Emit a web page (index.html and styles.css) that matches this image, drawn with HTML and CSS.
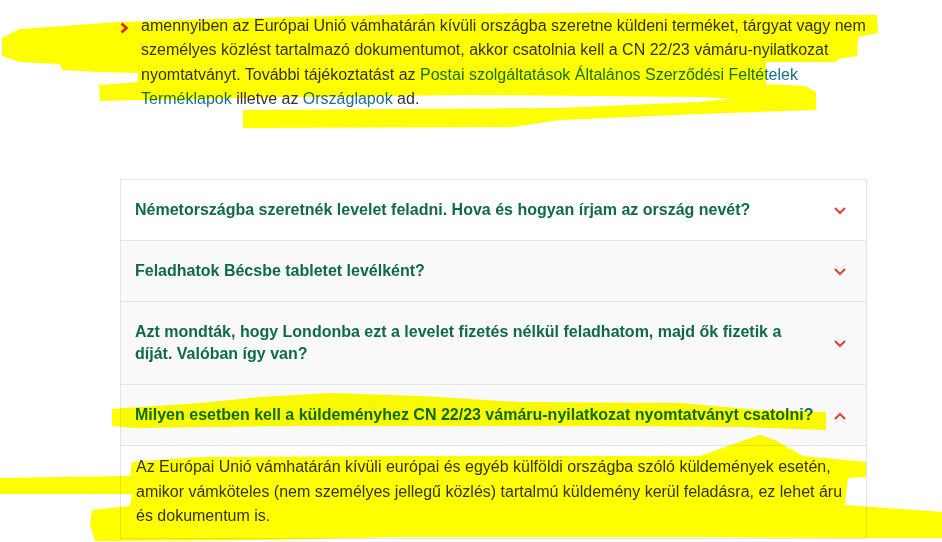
FILE: index.html
```
<!DOCTYPE html>
<html lang="hu">
<head>
<meta charset="utf-8">
<title>Postai szolgáltatások – GYIK</title>
<link rel="stylesheet" href="styles.css">
</head>
<body>
<main class="content">
  <ul class="bullets">
    <li class="bullet">
      <svg class="bullet-icon" width="9" height="12" viewBox="0 0 9 12"><polyline points="1.5,1.5 6.5,6 1.5,10.5" fill="none" stroke="#e0261c" stroke-width="2.6"/></svg>
      <p class="bullet-text">amennyiben az Európai Unió vámhatárán kívüli országba szeretne küldeni terméket, tárgyat vagy nem személyes közlést tartalmazó dokumentumot, akkor csatolnia kell a CN 22/23 vámáru-nyilatkozat nyomtatványt. További tájékoztatást az <a class="link" href="#">Postai szolgáltatások Általános Szerződési Feltételek</a> <a class="link" href="#">Terméklapok</a> illetve az <a class="link" href="#">Országlapok</a> ad.</p>
    </li>
  </ul>

  <section class="accordion">
    <div class="acc-item acc-white">
      <h3 class="acc-head">Németországba szeretnék levelet feladni. Hova és hogyan írjam az ország nevét?</h3>
      <svg class="acc-icon" width="12" height="8" viewBox="0 0 12 8"><polyline points="1,1 6,6 11,1" fill="none" stroke="#e2403a" stroke-width="2"/></svg>
    </div>
    <div class="acc-item">
      <h3 class="acc-head">Feladhatok Bécsbe tabletet levélként?</h3>
      <svg class="acc-icon" width="12" height="8" viewBox="0 0 12 8"><polyline points="1,1 6,6 11,1" fill="none" stroke="#e2403a" stroke-width="2"/></svg>
    </div>
    <div class="acc-item">
      <h3 class="acc-head">Azt mondták, hogy Londonba ezt a levelet fizetés nélkül feladhatom, majd ők fizetik a díját. Valóban így van?</h3>
      <svg class="acc-icon" width="12" height="8" viewBox="0 0 12 8"><polyline points="1,1 6,6 11,1" fill="none" stroke="#e2403a" stroke-width="2"/></svg>
    </div>
    <div class="acc-item">
      <h3 class="acc-head">Milyen esetben kell a küldeményhez CN 22/23 vámáru-nyilatkozat nyomtatványt csatolni?</h3>
      <svg class="acc-icon" width="12" height="8" viewBox="0 0 12 8"><polyline points="1,7 6,2 11,7" fill="none" stroke="#e2403a" stroke-width="2"/></svg>
    </div>
    <div class="acc-body">
      <p class="acc-text">Az Európai Unió vámhatárán kívüli európai és egyéb külföldi országba szóló küldemények esetén, amikor vámköteles (nem személyes jellegű közlés) tartalmú küldemény kerül feladásra, ez lehet áru és dokumentum is.</p>
    </div>
  </section>
</main>

<svg class="highlight" width="942" height="542" viewBox="0 0 942 542" aria-hidden="true">
  <path d="M2,38 L20,29 L120,22 L290,17 L430,14 L600,13 L877,15 L878,33 L858,37 L857,56 L838,59 L836,62 L764,62 L764,84 L805,86 L816,92 L816,102 L700,97 L470,95 L300,97 L140,100 L100,101 L99,85 L140,82 L140,73 L100,72 L62,70 L60,64 L20,62 L2,56 Z"/>
  <rect x="138" y="56" width="628" height="32"/>
  <path d="M243,110 L560,108 L700,102 L790,92 L816,93 L816,110 L700,114 L560,120 L513,127 L243,128 Z"/>
  <path d="M112,409 L200,403 L260,397 L330,393 L420,396 L520,402 L680,403 L760,410 L826,412 L826,430 L740,427 L600,426 L450,426 L300,426 L135,428 L112,426 Z"/>
  <path d="M0,478 L130,476 L132,462 L200,457 L400,456 L700,456 L745,440 L760,435 L775,440 L803,456 L866,462 L866,477 L848,478 L845,505 L942,512 L942,538 L860,538 L700,537 L400,537 L250,540 L95,541 L90,525 L92,510 L130,506 L132,494 L0,494 Z"/>
</svg>
</body>
</html>
```

FILE: styles.css
```
html, body {
  margin: 0;
  padding: 0;
}
body {
  position: relative;
  background: #fff;
  font-family: "Liberation Sans", Arial, sans-serif;
  color: #333;
  font-size: 16px;
  overflow: hidden;
  height: 542px;
}
.content {
  margin-left: 120px;
  width: 747px;
  padding-top: 14px;
}
.bullets {
  list-style: none;
  margin: 0 -10px 0 0;
  padding: 0;
}
.bullet {
  display: flex;
  align-items: flex-start;
}
.bullet-icon {
  flex: none;
  margin: 8px 12px 0 0;
}
.bullet-text {
  margin: 0;
  line-height: 24.4px;
}
.link {
  color: #1a6f8e;
  text-decoration: none;
}
.accordion {
  margin-top: 67px;
  border: 1px solid #e4e4e4;
}
.acc-item {
  display: flex;
  align-items: center;
  gap: 20px;
  padding: 19px 20px 18.5px 14px;
  background: #f9f9f9;
  border-bottom: 1px solid #e4e4e4;
}
.acc-white {
  background: #fff;
}
.acc-head {
  flex: 1;
  margin: 0;
  font-size: 16px;
  line-height: 22.5px;
  font-weight: bold;
  color: #0f6b46;
}
.acc-icon {
  flex: none;
  margin-top: 2px;
}
.acc-body {
  padding: 9px 10px 9px 15px;
  background: #fff;
}
.acc-text {
  margin: 0;
  line-height: 24.5px;
}
.highlight {
  position: absolute;
  top: 0;
  left: 0;
  fill: #ffff00;
  mix-blend-mode: multiply;
  pointer-events: none;
}
```
